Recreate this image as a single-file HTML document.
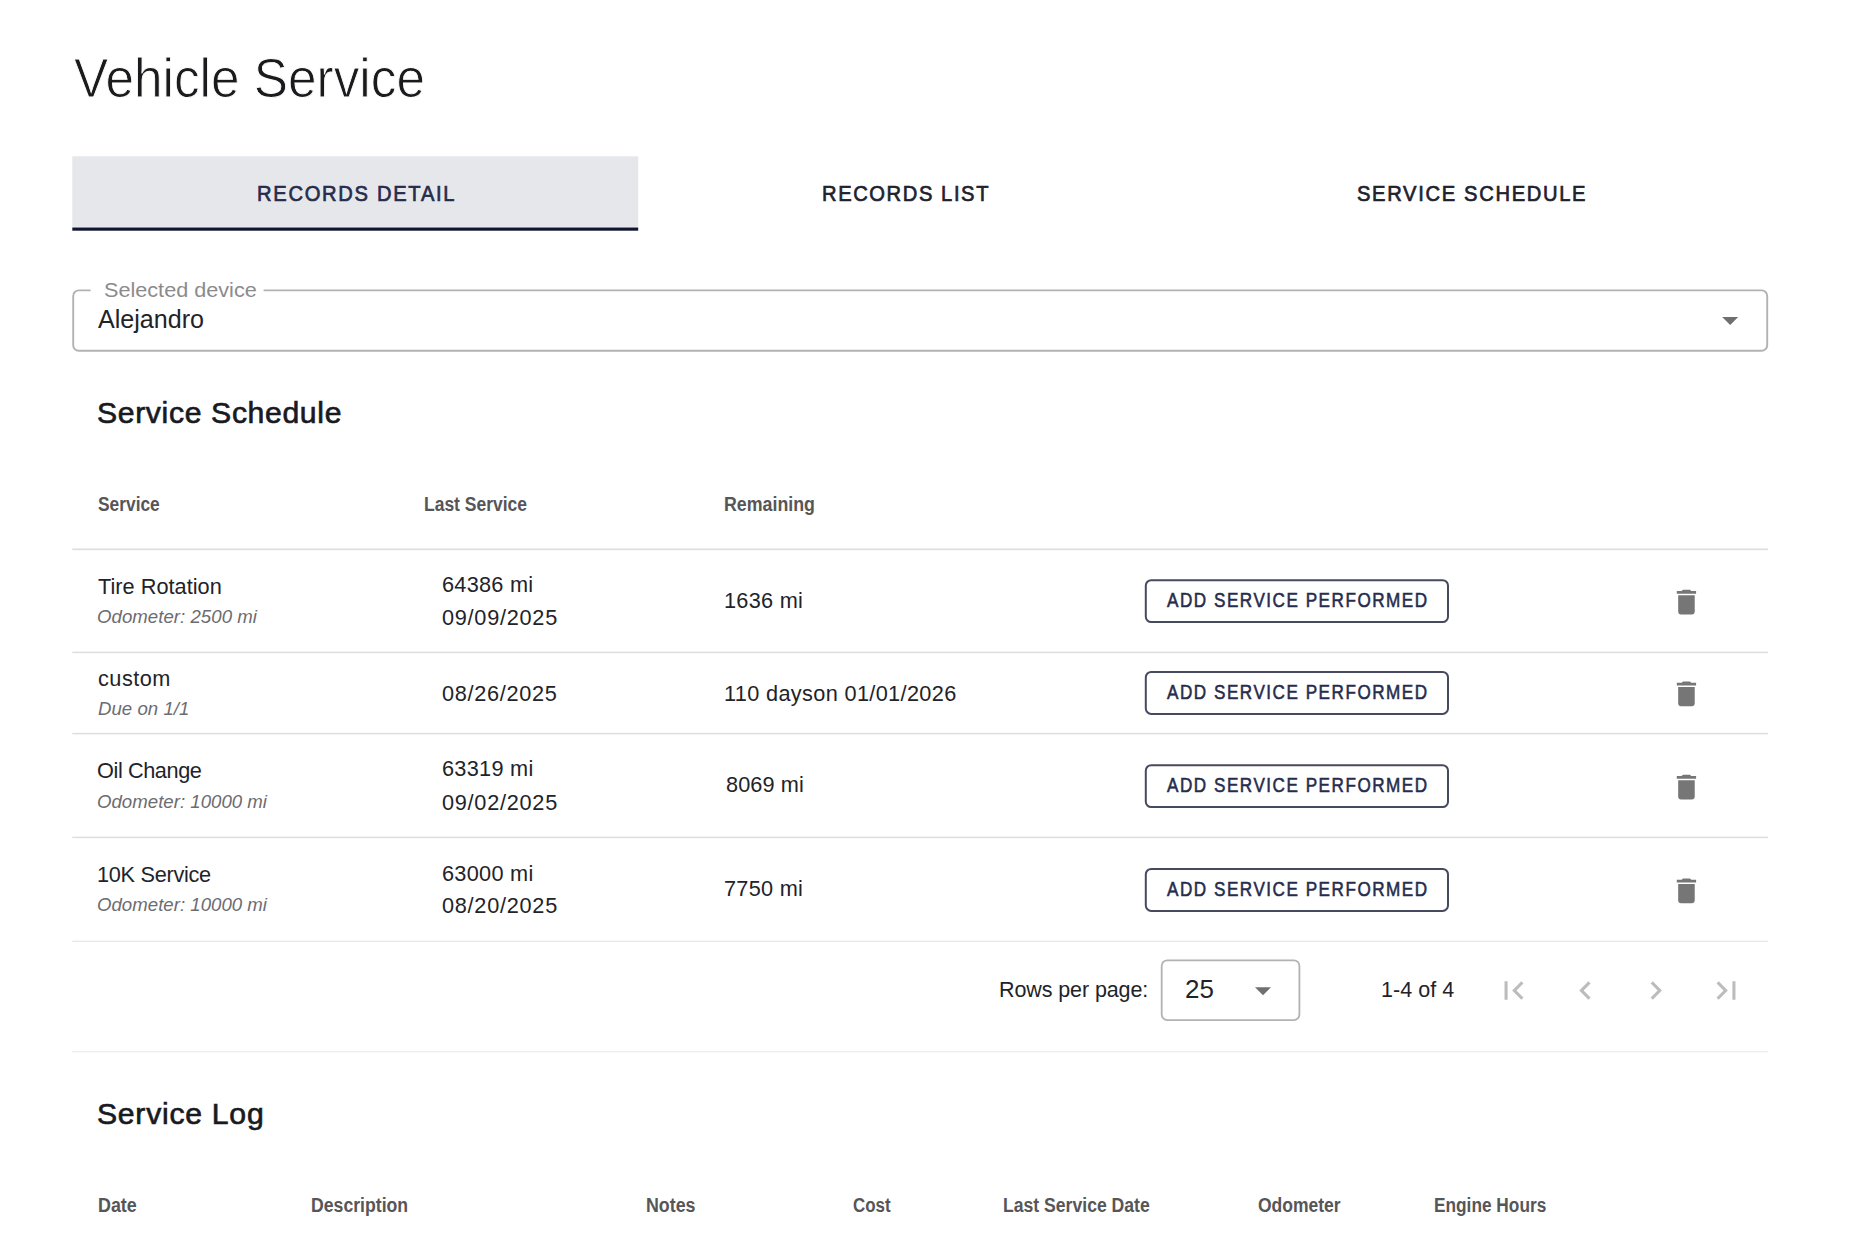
<!DOCTYPE html>
<html lang="en"><head><meta charset="utf-8"><title>Vehicle Service</title><style>
html,body{margin:0;padding:0;background:#fff;}
body{width:1849px;height:1247px;overflow:hidden;position:relative;font-family:"Liberation Sans",sans-serif;}
.shapes{position:absolute;left:0;top:0;}
.t{position:absolute;margin:0;padding:0;border:0;background:none;white-space:nowrap;line-height:1;font-weight:400;font-style:normal;font-family:"Liberation Sans",sans-serif;transform-origin:0 50%;display:block;}
</style></head>
<body>
<svg class="shapes" width="1849" height="1247" viewBox="0 0 1849 1247" aria-hidden="true">
<rect x="72.3" y="156.3" width="565.9" height="70.6" fill="#e6e7eb"/>
<rect x="72.3" y="227.5" width="565.9" height="3.2" fill="#12152f"/>
<path d="M90.6 290.4H78.8A5.6 5.6 0 0 0 73.2 296.0V345.2A5.6 5.6 0 0 0 78.8 350.8H1761.6000000000001A5.6 5.6 0 0 0 1767.2 345.2V296.0A5.6 5.6 0 0 0 1761.6000000000001 290.4H263.6" fill="none" stroke="#b2b2b2" stroke-width="1.9"/>
<path transform="translate(1711.00 300.90) scale(1.6000)" d="M7 10l5 5 5-5z" fill="#6f6f6f"/>
<rect x="72.3" y="548.45" width="1695.7" height="1.7" fill="#dedede"/>
<rect x="72.3" y="651.65" width="1695.7" height="1.5" fill="#dedede"/>
<rect x="72.3" y="732.85" width="1695.7" height="1.5" fill="#dedede"/>
<rect x="72.3" y="836.65" width="1695.7" height="1.5" fill="#dedede"/>
<rect x="72.3" y="940.6" width="1695.7" height="1.4" fill="#e9e9e9"/>
<rect x="72.3" y="1050.9" width="1695.7" height="1.4" fill="#ededed"/>
<rect x="1145.8" y="580.2" width="302.2" height="41.9" rx="5.4" fill="#fff" stroke="#474a5e" stroke-width="2"/>
<path transform="translate(1669.90 585.50) scale(1.3792)" d="M6 19c0 1.1.9 2 2 2h8c1.1 0 2-.9 2-2V7H6v12zM19 4h-3.5l-1-1h-5l-1 1H5v2h14V4z" fill="#767676"/>
<rect x="1145.8" y="672.0" width="302.2" height="41.9" rx="5.4" fill="#fff" stroke="#474a5e" stroke-width="2"/>
<path transform="translate(1669.90 677.30) scale(1.3792)" d="M6 19c0 1.1.9 2 2 2h8c1.1 0 2-.9 2-2V7H6v12zM19 4h-3.5l-1-1h-5l-1 1H5v2h14V4z" fill="#767676"/>
<rect x="1145.8" y="765.2" width="302.2" height="41.9" rx="5.4" fill="#fff" stroke="#474a5e" stroke-width="2"/>
<path transform="translate(1669.90 770.50) scale(1.3792)" d="M6 19c0 1.1.9 2 2 2h8c1.1 0 2-.9 2-2V7H6v12zM19 4h-3.5l-1-1h-5l-1 1H5v2h14V4z" fill="#767676"/>
<rect x="1145.8" y="869.0" width="302.2" height="41.9" rx="5.4" fill="#fff" stroke="#474a5e" stroke-width="2"/>
<path transform="translate(1669.90 874.30) scale(1.3792)" d="M6 19c0 1.1.9 2 2 2h8c1.1 0 2-.9 2-2V7H6v12zM19 4h-3.5l-1-1h-5l-1 1H5v2h14V4z" fill="#767676"/>
<rect x="1161.7" y="960.3" width="137.7" height="59.8" rx="5.6" fill="#fff" stroke="#b2b2b2" stroke-width="1.8"/>
<path transform="translate(1243.80 971.30) scale(1.6000)" d="M7 10l5 5 5-5z" fill="#6f6f6f"/>
<path transform="translate(1495.39 972.20) scale(1.5250)" d="M18.41 16.59L13.82 12l4.59-4.59L17 6l-6 6 6 6zM6 6h2v12H6z" fill="#bcbcbc"/>
<path transform="translate(1567.06 972.20) scale(1.5250)" d="M15.41 16.59L10.83 12l4.58-4.59L14 6l-6 6 6 6 1.41-1.41z" fill="#bcbcbc"/>
<path transform="translate(1637.54 972.20) scale(1.5250)" d="M8.59 16.59L13.17 12 8.59 7.41 10 6l6 6-6 6-1.41-1.41z" fill="#bcbcbc"/>
<path transform="translate(1708.01 972.20) scale(1.5250)" d="M5.59 7.41L10.18 12l-4.59 4.59L7 18l6-6-6-6zM16 6h2v12h-2z" fill="#bcbcbc"/>
</svg>
<header><h1 class="t" style="left:73.95px;top:51.45px;font-size:55.5px;color:#1b1b1d;-webkit-text-stroke:0.9px #fff;transform:scaleX(0.9249);">Vehicle Service</h1></header>
<nav><span class="t" style="left:256.59px;top:183.03px;font-size:22.4px;color:#262c4c;letter-spacing:1.89px;-webkit-text-stroke:0.7px #262c4c;transform:scaleX(0.9000);">RECORDS DETAIL</span><span class="t" style="left:822.01px;top:183.03px;font-size:22.4px;color:#21222c;letter-spacing:1.77px;-webkit-text-stroke:0.7px #21222c;transform:scaleX(0.9000);">RECORDS LIST</span><span class="t" style="left:1356.88px;top:183.03px;font-size:22.4px;color:#21222c;letter-spacing:1.86px;-webkit-text-stroke:0.7px #21222c;transform:scaleX(0.9000);">SERVICE SCHEDULE</span></nav>
<div class="field"><label class="t" style="left:103.73px;top:280.32px;font-size:20.4px;color:#8b8b8d;transform:scaleX(1.0611);">Selected device</label><span class="t" style="left:98.32px;top:305.89px;font-size:26.0px;color:#222329;transform:scaleX(0.9644);">Alejandro</span></div>
<section>
<h2 class="t" style="left:97.02px;top:397.79px;font-size:29.3px;color:#191a1f;letter-spacing:0.62px;-webkit-text-stroke:0.65px #191a1f;transform:scaleX(1.0300);">Service Schedule</h2>
<div class="thead"><span class="t" style="left:97.98px;top:494.89px;font-size:19.5px;color:#565658;font-weight:700;transform:scaleX(0.8900);">Service</span><span class="t" style="left:423.54px;top:494.89px;font-size:19.5px;color:#565658;font-weight:700;transform:scaleX(0.8960);">Last Service</span><span class="t" style="left:724.11px;top:494.89px;font-size:19.5px;color:#565658;font-weight:700;transform:scaleX(0.9124);">Remaining</span></div>
<div class="tr"><span class="t" style="left:97.98px;top:575.61px;font-size:22.4px;color:#222329;letter-spacing:0.02px;transform:scaleX(0.9700);">Tire Rotation</span><span class="t" style="left:97.27px;top:606.54px;font-size:19.2px;color:#6c6c71;font-style:italic;letter-spacing:0.04px;transform:scaleX(0.9700);">Odometer: 2500 mi</span><span class="t" style="left:442.04px;top:574.12px;font-size:22.4px;color:#222329;letter-spacing:0.25px;transform:scaleX(0.9700);">64386 mi</span><span class="t" style="left:442.06px;top:606.50px;font-size:22.4px;color:#222329;letter-spacing:0.75px;transform:scaleX(0.9700);">09/09/2025</span><span class="t" style="left:724.02px;top:589.63px;font-size:22.4px;color:#222329;letter-spacing:0.27px;transform:scaleX(0.9700);">1636 mi</span><button class="t" style="left:1166.92px;top:590.55px;font-size:19.9px;color:#262c4c;letter-spacing:1.77px;-webkit-text-stroke:0.55px #262c4c;transform:scaleX(0.8600);">ADD SERVICE PERFORMED</button></div>
<div class="tr"><span class="t" style="left:97.82px;top:668.42px;font-size:22.4px;color:#222329;letter-spacing:0.50px;transform:scaleX(0.9700);">custom</span><span class="t" style="left:98.34px;top:699.44px;font-size:19.2px;color:#6c6c71;font-style:italic;letter-spacing:0.03px;transform:scaleX(0.9700);">Due on 1/1</span><span class="t" style="left:442.26px;top:682.81px;font-size:22.4px;color:#222329;letter-spacing:0.70px;transform:scaleX(0.9700);">08/26/2025</span><span class="t" style="left:723.92px;top:682.81px;font-size:22.4px;color:#222329;letter-spacing:0.35px;transform:scaleX(0.9700);">110 dayson 01/01/2026</span><button class="t" style="left:1166.92px;top:682.95px;font-size:19.9px;color:#262c4c;letter-spacing:1.77px;-webkit-text-stroke:0.55px #262c4c;transform:scaleX(0.8600);">ADD SERVICE PERFORMED</button></div>
<div class="tr"><span class="t" style="left:97.13px;top:759.75px;font-size:22.4px;color:#222329;letter-spacing:-0.43px;transform:scaleX(0.9700);">Oil Change</span><span class="t" style="left:97.27px;top:791.64px;font-size:19.2px;color:#6c6c71;font-style:italic;letter-spacing:0.02px;transform:scaleX(0.9700);">Odometer: 10000 mi</span><span class="t" style="left:442.17px;top:758.14px;font-size:22.4px;color:#222329;letter-spacing:0.29px;transform:scaleX(0.9700);">63319 mi</span><span class="t" style="left:442.06px;top:791.60px;font-size:22.4px;color:#222329;letter-spacing:0.75px;transform:scaleX(0.9700);">09/02/2025</span><span class="t" style="left:725.56px;top:773.73px;font-size:22.4px;color:#222329;letter-spacing:0.10px;transform:scaleX(0.9700);">8069 mi</span><button class="t" style="left:1166.92px;top:775.55px;font-size:19.9px;color:#262c4c;letter-spacing:1.77px;-webkit-text-stroke:0.55px #262c4c;transform:scaleX(0.8600);">ADD SERVICE PERFORMED</button></div>
<div class="tr"><span class="t" style="left:96.82px;top:864.13px;font-size:22.4px;color:#222329;letter-spacing:-0.30px;transform:scaleX(0.9700);">10K Service</span><span class="t" style="left:97.27px;top:895.04px;font-size:19.2px;color:#6c6c71;font-style:italic;letter-spacing:0.02px;transform:scaleX(0.9700);">Odometer: 10000 mi</span><span class="t" style="left:442.17px;top:862.54px;font-size:22.4px;color:#222329;letter-spacing:0.29px;transform:scaleX(0.9700);">63000 mi</span><span class="t" style="left:442.06px;top:895.00px;font-size:22.4px;color:#222329;letter-spacing:0.75px;transform:scaleX(0.9700);">08/20/2025</span><span class="t" style="left:724.49px;top:878.13px;font-size:22.4px;color:#222329;letter-spacing:0.27px;transform:scaleX(0.9700);">7750 mi</span><button class="t" style="left:1166.92px;top:879.95px;font-size:19.9px;color:#262c4c;letter-spacing:1.77px;-webkit-text-stroke:0.55px #262c4c;transform:scaleX(0.8600);">ADD SERVICE PERFORMED</button></div>
<div class="tfoot"><span class="t" style="left:999.03px;top:979.12px;font-size:22.4px;color:#222329;letter-spacing:-0.10px;transform:scaleX(0.9600);">Rows per page:</span><span class="t" style="left:1184.58px;top:976.66px;font-size:25.2px;color:#222329;transform:scaleX(1.0304);">25</span><span class="t" style="left:1380.72px;top:979.12px;font-size:22.4px;color:#222329;letter-spacing:0.05px;transform:scaleX(0.9600);">1-4 of 4</span></div>
</section>
<section><h2 class="t" style="left:96.75px;top:1099.39px;font-size:29.3px;color:#191a1f;letter-spacing:0.71px;-webkit-text-stroke:0.65px #191a1f;transform:scaleX(1.0300);">Service Log</h2><div class="thead"><span class="t" style="left:97.90px;top:1196.49px;font-size:19.5px;color:#565658;font-weight:700;transform:scaleX(0.9174);">Date</span><span class="t" style="left:310.97px;top:1196.49px;font-size:19.5px;color:#565658;font-weight:700;transform:scaleX(0.9055);">Description</span><span class="t" style="left:646.13px;top:1196.49px;font-size:19.5px;color:#565658;font-weight:700;transform:scaleX(0.9131);">Notes</span><span class="t" style="left:852.57px;top:1196.49px;font-size:19.5px;color:#565658;font-weight:700;transform:scaleX(0.8668);">Cost</span><span class="t" style="left:1003.08px;top:1196.49px;font-size:19.5px;color:#565658;font-weight:700;transform:scaleX(0.9027);">Last Service Date</span><span class="t" style="left:1257.84px;top:1196.49px;font-size:19.5px;color:#565658;font-weight:700;transform:scaleX(0.8972);">Odometer</span><span class="t" style="left:1433.70px;top:1196.49px;font-size:19.5px;color:#565658;font-weight:700;transform:scaleX(0.8855);">Engine Hours</span></div></section>
</body></html>
